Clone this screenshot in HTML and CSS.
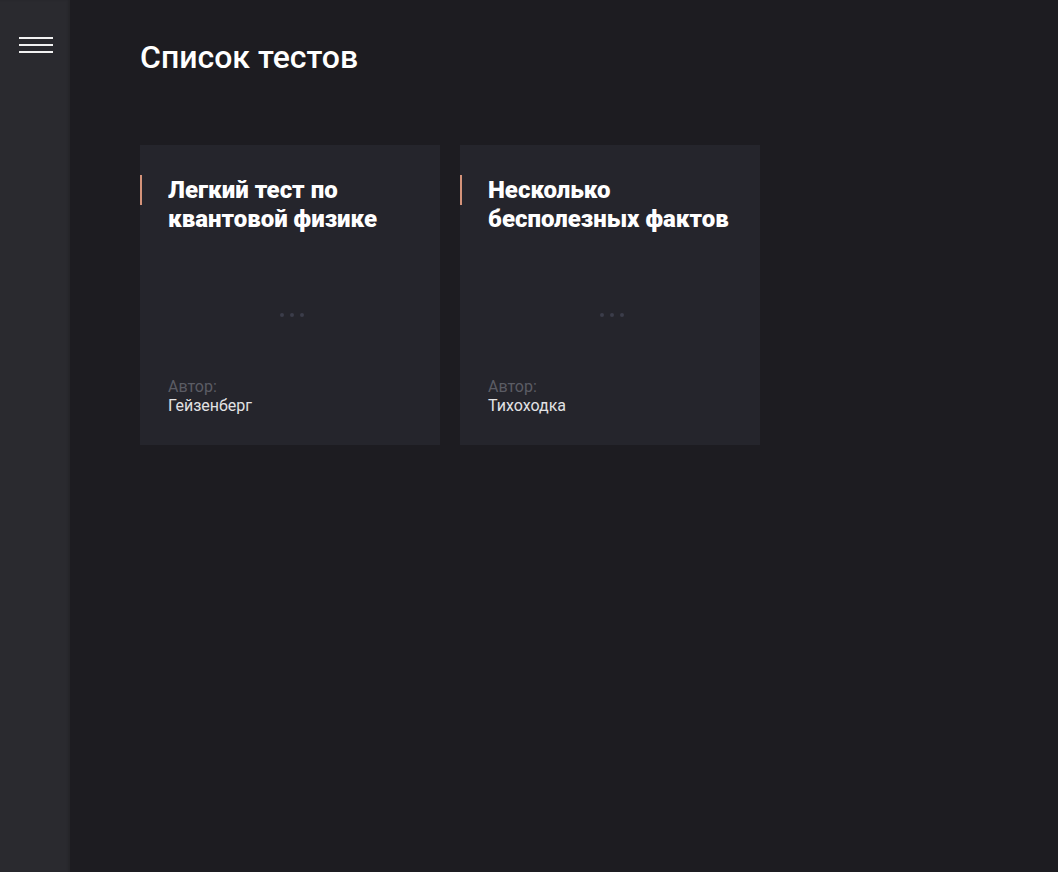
FILE: index.html
```html
<!DOCTYPE html>
<html lang="ru">
<head>
<meta charset="utf-8">
<title>Список тестов</title>
<link rel="stylesheet" href="styles.css">
</head>
<body>
<div class="app">
  <aside class="sidebar">
    <button class="burger" aria-label="Меню">
      <span></span><span></span><span></span>
    </button>
  </aside>
  <main class="main">
    <h1 class="title">Список тестов</h1>
    <div class="cards">
      <div class="card">
        <h2 class="card-title">Легкий тест по квантовой физике</h2>
        <div class="dots"><i></i><i></i><i></i></div>
        <div class="author">
          <div class="author-label">Автор:</div>
          <div class="author-name">Гейзенберг</div>
        </div>
      </div>
      <div class="card">
        <h2 class="card-title">Несколько бесполезных фактов</h2>
        <div class="dots"><i></i><i></i><i></i></div>
        <div class="author">
          <div class="author-label">Автор:</div>
          <div class="author-name">Тихоходка</div>
        </div>
      </div>
    </div>
  </main>
</div>
</body>
</html>
```
FILE: styles.css
```css
* { box-sizing: border-box; }
html, body { margin: 0; padding: 0; height: 100%; }
body {
  background: #1d1c21;
  font-family: Roboto, "Liberation Sans", sans-serif;
  color: #fff;
}
.app { display: flex; min-height: 100vh; }
.sidebar {
  width: 70px;
  flex: none;
  background: #2a2a2f;
  box-shadow: inset -2px 0 2px rgba(0,0,0,0.12);
  padding-top: 37px;
  padding-left: 19px;
}
.burger {
  display: flex;
  flex-direction: column;
  gap: 5px;
  width: 34px;
  padding: 0;
  border: 0;
  background: none;
  cursor: pointer;
}
.burger span {
  display: block;
  height: 2px;
  background: #f2f2f2;
}
.main { flex: 1; padding: 37px 0 0 70px; }
.title {
  margin: 0;
  font-size: 32px;
  font-weight: 500;
  line-height: 40px;
  color: #fff;
}
.cards {
  display: flex;
  gap: 20px;
  margin-top: 68px;
}
.card {
  width: 300px;
  height: 300px;
  background: #25252c;
  padding: 31px 28px 30px 28px;
  display: flex;
  flex-direction: column;
  position: relative;
}
.card-title {
  margin: 0;
  font-size: 24px;
  font-weight: 900;
  line-height: 29px;
  letter-spacing: 0;
  color: #fff;
  position: relative;
}
.card-title::before {
  content: "";
  position: absolute;
  left: -28px;
  top: -1px;
  width: 2px;
  height: 30px;
  background: #d4937a;
}
.dots {
  display: flex;
  justify-content: center;
  gap: 6px;
  margin-top: 79px;
  padding-left: 4px;
}
.dots i {
  width: 4px;
  height: 4px;
  border-radius: 50%;
  background: #3b3d4a;
}
.author { margin-top: auto; font-size: 16px; line-height: 19px; }
.author-label { color: #5b5c64; }
.author-name { color: #e2e2e4; }
```
